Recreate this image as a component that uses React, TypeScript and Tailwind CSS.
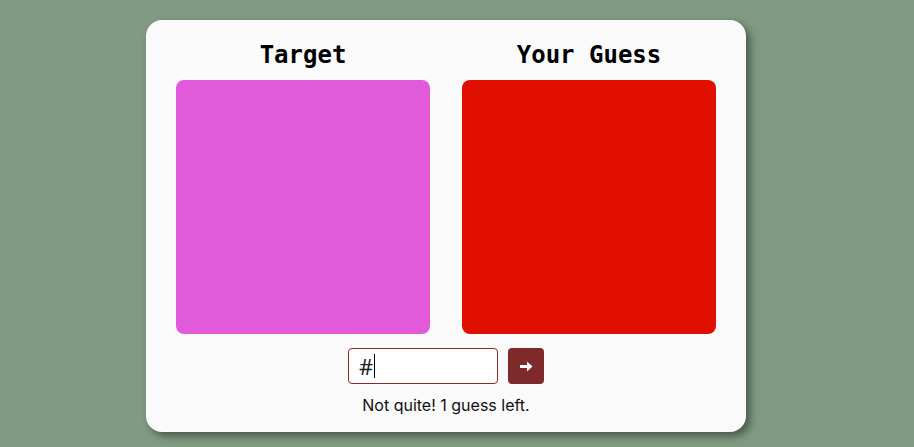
import React from "react";

export default function App() {
  return (
    <div className="w-[914px] h-[447px] bg-[#819b83] flex justify-start items-start pt-[20px] pl-[146px]" style={{ fontFamily: "Inter, 'Noto Sans', sans-serif" }}>
      <div className="w-[600px] h-[412px] bg-[#fafafa] rounded-[16px] shadow-[4px_4px_8px_rgba(0,0,0,0.45)] px-[30px] pt-[19px] flex flex-col items-center">
        <div className="flex gap-[32px]">
          <div className="flex flex-col items-center">
            <h2 className="text-[24px] leading-[32px] font-bold text-black mb-[9px]" style={{ fontFamily: "'DejaVu Sans Mono', 'Liberation Mono', monospace" }}>Target</h2>
            <div className="w-[254px] h-[254px] rounded-[8px] bg-[#e05ad9]" />
          </div>
          <div className="flex flex-col items-center">
            <h2 className="text-[24px] leading-[32px] font-bold text-black mb-[9px]" style={{ fontFamily: "'DejaVu Sans Mono', 'Liberation Mono', monospace" }}>Your Guess</h2>
            <div className="w-[254px] h-[254px] rounded-[8px] bg-[#e00f00]" />
          </div>
        </div>
        <div className="flex gap-[10px] mt-[14px]">
          <div className="w-[150px] h-[36px] border border-[#8b2a2a] rounded-[4px] bg-white flex items-center pl-[10px]">
            <span className="text-[22px] leading-none text-[#222]" style={{ fontFamily: "'Noto Sans', Inter, sans-serif" }}>#</span>
            <span className="w-px h-[24px] bg-black ml-[1px]" />
          </div>
          <button className="w-[36px] h-[36px] rounded-[4px] bg-[#7f2a2a] text-white flex items-center justify-center" aria-label="Submit">
            <svg width="13" height="11" viewBox="0 0 13 11" fill="white">
              <path d="M0 4 H7 V0.5 L12.5 5.5 L7 10.5 V7 H0 Z" />
            </svg>
          </button>
        </div>
        <p className="mt-[9px] text-[16px] leading-[24px] text-[#111]">Not quite! 1 guess left.</p>
      </div>
    </div>
  );
}
